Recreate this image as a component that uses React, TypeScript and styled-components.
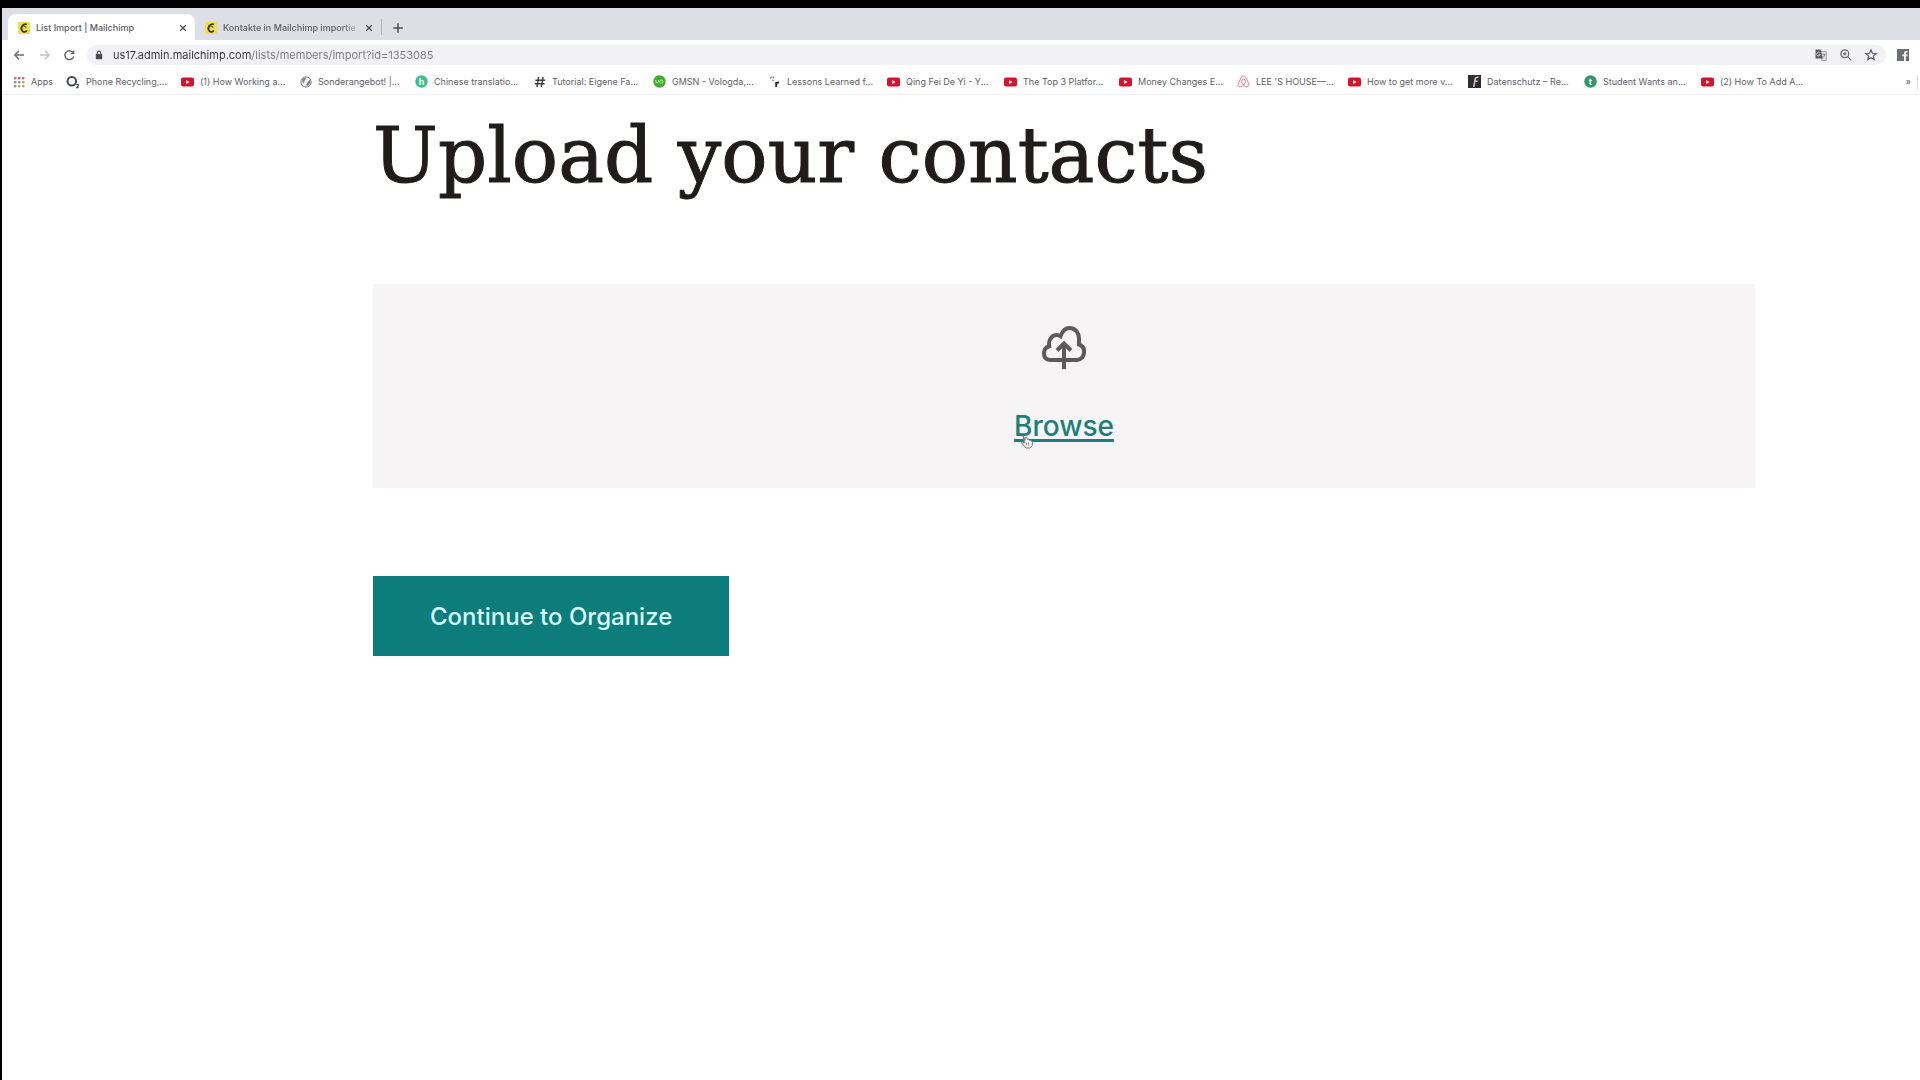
import React from "react";
import styled, { createGlobalStyle, css } from "styled-components";

const GlobalStyle = createGlobalStyle`
  *, *::before, *::after { box-sizing: border-box; }
  html { background: #000; }
  body { margin: 0; background: #000; font-family: Inter, "Liberation Sans", sans-serif; }
  button, input { font: inherit; }
`;

const Screen = styled.div`
  display: flex;
  flex-direction: column;
  min-height: 100vh;
  padding: 8px 0 0 2px;
  background: #000;
`;

const TabStrip = styled.div`
  display: flex;
  align-items: stretch;
  height: 32px;
  padding: 6px 6px 0;
  background: #dedee6;
`;

const Tab = styled.div<{ $active?: boolean }>`
  display: flex;
  align-items: center;
  width: ${(p) => (p.$active ? 187 : 186)}px;
  padding: 2px 8px 0 10px;
  border-radius: 8px 8px 0 0;
  ${(p) => p.$active && css`background: #fff;`}
`;

const PlainButton = styled.button`
  display: flex;
  align-items: center;
  justify-content: center;
  flex: none;
  padding: 0;
  border: 0;
  background: none;
  color: #5c5d62;
`;

const TabTitle = styled(PlainButton)<{ $faded?: boolean }>`
  flex: 1;
  justify-content: flex-start;
  gap: 6px;
  min-width: 0;
  overflow: hidden;
  font-size: 9px;
  font-weight: 500;
  line-height: 14px;
  white-space: nowrap;
  ${(p) =>
    p.$faded &&
    css`
      mask-image: linear-gradient(to right, #000 85%, transparent);
    `}
`;

const NewTabButton = styled(PlainButton)`
  padding-top: 2px;
`;

const StripDivider = styled.span`
  align-self: center;
  width: 1px;
  height: 16px;
  margin-right: 10px;
  background: #b4b5bc;
`;

const Toolbar = styled.div`
  display: flex;
  align-items: center;
  gap: 10px;
  height: 29px;
  padding: 0 10px;
  background: #fff;
`;

const NavButtons = styled.div`
  display: flex;
  gap: 10px;
`;

const AddressBar = styled.div`
  display: flex;
  flex: 1;
  align-items: center;
  gap: 10px;
  height: 20px;
  padding: 0 8px;
  border-radius: 10px;
  background: #f1f1f6;
`;

const AddressInput = styled.input`
  flex: 1;
  min-width: 0;
  height: 16px;
  padding: 0;
  border: 0;
  outline: 0;
  color: #4a4b50;
  font-size: 11px;
  background: linear-gradient(to right, #35363a 139px, #77787e 139px);
  background-clip: text;
  -webkit-text-fill-color: transparent;
`;

const AddressActions = styled.div`
  display: flex;
  gap: 11px;
`;

const Bookmarks = styled.nav`
  display: flex;
  align-items: center;
  gap: 12px;
  height: 26px;
  padding: 0 2px 0 11px;
  border-bottom: 1px solid #f0f0f3;
  background: #fff;
`;

const Bookmark = styled.a<{ $width: number }>`
  display: flex;
  flex: none;
  align-items: center;
  gap: 6px;
  width: ${(p) => p.$width}px;
  color: #5f6065;
  font-size: 9px;
  line-height: 14px;
  text-decoration: none;
  white-space: nowrap;
`;

const MoreBookmarks = styled(PlainButton)`
  margin-left: auto;
  padding-right: 6px;
  border-right: 1px solid #dcdce2;
  font-size: 9px;
  line-height: 14px;
`;

const Page = styled.main`
  display: flex;
  flex: 1;
  flex-direction: column;
  align-items: flex-start;
  padding: 5px 165px 64px 371px;
  background: #fff;
`;

const Title = styled.h1`
  margin: 0 0 72px;
  color: #1f1c1b;
  font-family: "DejaVu Serif", "Liberation Serif", serif;
  font-size: 77px;
  font-weight: 400;
  line-height: 112px;
  -webkit-text-stroke: 1px #1f1c1b;
`;

const DropZone = styled.section`
  display: flex;
  flex-direction: column;
  align-items: center;
  gap: 37px;
  width: 100%;
  padding: 41px 0 44px;
  background: #f6f4f5;
`;

const BrowseLink = styled.a`
  position: relative;
  color: #1d7e7b;
  font-size: 28px;
  font-weight: 500;
  line-height: 36px;
  text-decoration: underline;
  text-decoration-thickness: 3px;
  text-underline-offset: 3px;
  text-decoration-skip-ink: none;
`;

const Pointer = styled.svg`
  position: absolute;
  left: 6px;
  top: 26px;
`;

const ContinueButton = styled.button`
  margin-top: 88px;
  padding: 21px 57px 19px;
  border: 0;
  background: #0c7d7a;
  color: #d8fbff;
  font-size: 24px;
  font-weight: 500;
  line-height: 40px;
`;

const ChimpIcon = () => (
  <svg width="12" height="12" viewBox="0 0 12 12" aria-hidden="true">
    <rect width="12" height="12" rx="1" fill="#f0df4e" />
    <path d="M8.800 2.600C6.800 1.400 3.800 3 3.600 6.100c-.2 2.600 1.500 4 3.200 3.700 1-.2 1.700-.8 2-1.500" fill="none" stroke="#3b3414" strokeWidth="1.700" />
    <path d="M4.600 2.800L3 5.500l.2 2.500M5.600 4.500c1.400-.6 2.600.2 2.400 1.500" fill="none" stroke="#3b3414" strokeWidth="1" />
  </svg>
);

const CloseIcon = () => (
  <svg width="8" height="8" viewBox="0 0 8 8" aria-hidden="true">
    <path d="M1.200 1.200l5.600 5.600M6.800 1.200L1.200 6.800" stroke="#4c4d52" strokeWidth="1.300" />
  </svg>
);

const YoutubeIcon = () => (
  <svg width="13" height="12" viewBox="0 0 13 12" aria-hidden="true">
    <rect y="1.500" width="13" height="9" rx="2" fill="#d5132f" />
    <path d="M5.200 4v4l3.400-2z" fill="#fff" />
  </svg>
);

const AppsIcon = () => (
  <svg width="12" height="12" viewBox="0 0 12 12" aria-hidden="true">
    {["#c4717c", "#b7686c", "#c4717c", "#87918c", "#7d9cc2", "#d0a35a", "#8aa37c", "#d0a35a", "#d0a35a"].map((fill, i) => (
      <rect key={i} x={1 + (i % 3) * 4} y={1 + Math.floor(i / 3) * 4} width="2.400" height="2.400" fill={fill} />
    ))}
  </svg>
);

const OxygenIcon = () => (
  <svg width="14" height="14" viewBox="0 0 14 14" aria-hidden="true">
    <circle cx="5.800" cy="6.300" r="4.300" fill="none" stroke="#44474f" strokeWidth="2" />
    <path d="M10.300 9.600h2v1.300l-1.600 1.900h2" fill="none" stroke="#44474f" strokeWidth="1.100" />
  </svg>
);

const GlobeIcon = () => (
  <svg width="12" height="12" viewBox="0 0 12 12" aria-hidden="true">
    <circle cx="6" cy="6" r="5.100" fill="#f4f4f6" stroke="#797a7f" strokeWidth="1" />
    <path d="M2 3l3-1.500L6 3 4.500 5 4 7.500 2.500 6.500zM10 3.500L7.500 6 6 9.500 8 10l2.500-3z" fill="#85868b" />
  </svg>
);

const HashIcon = () => (
  <svg width="12" height="12" viewBox="0 0 12 12" aria-hidden="true">
    <path d="M4.600 1L3 11M9 1L7.400 11M1.400 4.200h9.800M.8 7.800h9.800" stroke="#3d3e42" strokeWidth="1.500" />
  </svg>
);

const UpworkIcon = () => (
  <svg width="13" height="13" viewBox="0 0 13 13" aria-hidden="true">
    <circle cx="6.500" cy="6.500" r="6.200" fill="#3fae2c" />
    <path d="M2.800 5v1.500a1.300 1.300 0 0 0 2.600 0V5c.8 2 1.500 3 3 3a1.500 1.500 0 1 0-1.500-1.500" fill="none" stroke="#c9f0bd" strokeWidth=".9" />
  </svg>
);

const DottedIcon = () => (
  <svg width="12" height="12" viewBox="0 0 12 12" aria-hidden="true">
    <path d="M1 2.500l1.500-1.500h2l.5 1M3 4l2 1" fill="none" stroke="#8b8c91" strokeWidth="1.200" />
    <path d="M7.200 11V6M7.200 8c.3-1.200 1.300-1.700 2.800-1.500" fill="none" stroke="#2e2f33" strokeWidth="1.900" />
  </svg>
);

const AirbnbIcon = () => (
  <svg width="13" height="13" viewBox="0 0 13 13" aria-hidden="true">
    <path d="M6.500 10C4.800 8 4.500 7.200 4.600 6.300a1.900 1.900 0 0 1 3.800 0C8.500 7.200 8.200 8 6.500 10zm0 0c-1.500 2-3.300 2.400-4.600 1.500-1.200-.9-1-2-.4-3.400.9-2.200 2-4.300 3.100-6.300C5.300.6 7.700.6 8.400 1.800c1.100 2 2.200 4.100 3.100 6.300.6 1.400.8 2.500-.4 3.400-1.300.9-3.100.5-4.600-1.500z" fill="none" stroke="#e77a87" strokeWidth="1" />
  </svg>
);

const DarkIcon = () => (
  <svg width="13" height="13" viewBox="0 0 13 13" aria-hidden="true">
    <rect width="13" height="13" fill="#332b30" />
    <path d="M10.500 1.500C7 1.500 6.500 3 6.200 5L5 12h1.500l1-5h2l.3-1.500H7.800C8 3.600 8.500 3 10.500 3z" fill="#c9c1c5" />
  </svg>
);

const LetterIcon = ({ letter, fill }: { letter: string; fill: string }) => (
  <svg width="13" height="13" viewBox="0 0 13 13" aria-hidden="true">
    <circle cx="6.500" cy="6.500" r="6.200" fill={fill} />
    <text x="6.500" y="9.500" textAnchor="middle" fontSize="9" fontWeight="700" fill="#fff">{letter}</text>
  </svg>
);

const bookmarks: { label: string; width: number; icon: React.ReactNode }[] = [
  { label: "Apps", width: 41, icon: <AppsIcon /> },
  { label: "Phone Recycling,...", width: 103, icon: <OxygenIcon /> },
  { label: "(1) How Working a...", width: 107, icon: <YoutubeIcon /> },
  { label: "Sonderangebot! |...", width: 103, icon: <GlobeIcon /> },
  { label: "Chinese translatio...", width: 107, icon: <LetterIcon letter="h" fill="#3cc08b" /> },
  { label: "Tutorial: Eigene Fa...", width: 107, icon: <HashIcon /> },
  { label: "GMSN - Vologda,...", width: 104, icon: <UpworkIcon /> },
  { label: "Lessons Learned f...", width: 106, icon: <DottedIcon /> },
  { label: "Qing Fei De Yi - Y...", width: 105, icon: <YoutubeIcon /> },
  { label: "The Top 3 Platfor...", width: 103, icon: <YoutubeIcon /> },
  { label: "Money Changes E...", width: 106, icon: <YoutubeIcon /> },
  { label: "LEE 'S HOUSE—...", width: 99, icon: <AirbnbIcon /> },
  { label: "How to get more v...", width: 108, icon: <YoutubeIcon /> },
  { label: "Datenschutz – Re...", width: 104, icon: <DarkIcon /> },
  { label: "Student Wants an...", width: 105, icon: <LetterIcon letter="t" fill="#35946f" /> },
  { label: "(2) How To Add A...", width: 104, icon: <YoutubeIcon /> },
];

export default function App() {
  return (
    <Screen>
      <GlobalStyle />
      <TabStrip>
        <Tab $active>
          <TabTitle><ChimpIcon />List Import | Mailchimp</TabTitle>
          <PlainButton aria-label="Close tab"><CloseIcon /></PlainButton>
        </Tab>
        <Tab>
          <TabTitle $faded><ChimpIcon />Kontakte in Mailchimp importie</TabTitle>
          <PlainButton aria-label="Close tab"><CloseIcon /></PlainButton>
        </Tab>
        <StripDivider />
        <NewTabButton aria-label="New tab">
          <svg width="12" height="12" viewBox="0 0 12 12" aria-hidden="true">
            <path d="M6 1.200v9.600M1.200 6h9.600" stroke="#4c4d52" strokeWidth="1.500" />
          </svg>
        </NewTabButton>
      </TabStrip>
      <Toolbar>
        <NavButtons>
          <PlainButton aria-label="Back">
            <svg width="15" height="14" viewBox="0 0 15 14" aria-hidden="true">
              <path d="M12 7H3M7 2.800L2.800 7 7 11.200" fill="none" stroke="#6a6b70" strokeWidth="1.400" />
            </svg>
          </PlainButton>
          <PlainButton aria-label="Forward">
            <svg width="15" height="14" viewBox="0 0 15 14" aria-hidden="true">
              <path d="M3 7h9M8 2.800L12.200 7 8 11.200" fill="none" stroke="#c2c3c9" strokeWidth="1.400" />
            </svg>
          </PlainButton>
          <PlainButton aria-label="Reload">
            <svg width="15" height="14" viewBox="0 0 15 14" aria-hidden="true">
              <path d="M11.200 4.600A4.500 4.500 0 1 0 11.800 8.400" fill="none" stroke="#6a6b70" strokeWidth="1.500" />
              <path d="M12.400 1.800v4.400H8z" fill="#6a6b70" />
            </svg>
          </PlainButton>
        </NavButtons>
        <AddressBar>
          <svg width="8" height="10" viewBox="0 0 8 10" aria-hidden="true">
            <rect x=".8" y="4" width="6.400" height="5.200" rx=".6" fill="#4c4d52" />
            <path d="M2.300 4V2.800a1.700 1.700 0 0 1 3.400 0V4" fill="none" stroke="#4c4d52" strokeWidth="1.100" />
          </svg>
          <AddressInput aria-label="Address" defaultValue="us17.admin.mailchimp.com/lists/members/import?id=1353085" />
          <AddressActions>
            <PlainButton aria-label="Translate">
              <svg width="14" height="14" viewBox="0 0 14 14" aria-hidden="true">
                <path d="M5.500 3.500h6.800v9H7.600z" fill="#dcdce1" stroke="#97989e" strokeWidth=".8" />
                <path d="M1.500 1.500h5l2.500 9h-7.500z" fill="#5a5b60" />
                <path d="M6 5.200a1.800 1.800 0 1 0 .2 1.500H4.600" fill="none" stroke="#e4e4ea" strokeWidth=".8" />
                <path d="M8.500 6.500h3M10 5.500v1M9 9.500l2-2.500" fill="none" stroke="#77787e" strokeWidth=".8" />
              </svg>
            </PlainButton>
            <PlainButton aria-label="Zoom">
              <svg width="14" height="14" viewBox="0 0 14 14" aria-hidden="true">
                <circle cx="5.800" cy="5.800" r="3.900" fill="none" stroke="#67686d" strokeWidth="1.300" />
                <path d="M8.700 8.700l3.600 3.600M4 5.800h3.600M5.800 4v3.600" stroke="#67686d" strokeWidth="1.200" />
              </svg>
            </PlainButton>
            <PlainButton aria-label="Bookmark this page">
              <svg width="14" height="14" viewBox="0 0 14 14" aria-hidden="true">
                <path d="M7 2l1.500 3.300 3.600.4-2.700 2.400.8 3.500L7 9.800l-3.200 1.800.8-3.500L1.900 5.700l3.600-.4z" fill="none" stroke="#5a5b60" strokeWidth="1.200" />
              </svg>
            </PlainButton>
          </AddressActions>
        </AddressBar>
        <PlainButton aria-label="Facebook extension">
          <svg width="14" height="14" viewBox="0 0 14 14" aria-hidden="true">
            <rect x="1" y="1" width="12" height="12" fill="#6d6e73" />
            <path d="M8 13V8.300H6.300V6.500H8V5.200C8 3.700 8.900 2.900 10.400 2.900h1.200v1.700h-.8c-.7 0-.9.3-.9.900v1h1.700l-.2 1.800H9.900V13z" fill="#f4f4f6" />
          </svg>
        </PlainButton>
      </Toolbar>
      <Bookmarks aria-label="Bookmarks">
        {bookmarks.map((b) => (
          <Bookmark key={b.label} href="#" $width={b.width}>
            {b.icon}
            {b.label}
          </Bookmark>
        ))}
        <MoreBookmarks aria-label="More bookmarks">»</MoreBookmarks>
      </Bookmarks>
      <Page>
        <Title>Upload your contacts</Title>
        <DropZone aria-label="File upload">
          <svg width="44" height="46" viewBox="0 0 44 46" fill="none" stroke="#5d5a5b" strokeWidth="4" aria-hidden="true">
            <path d="M7.500 35C3.500 34.500 2 31.500 2 28.500c0-4 2.200-6.500 5.200-7.300C6 15 10 10.500 14 10c2-.2 3 .2 4.500 1.200C20.500 6 23.500 3 27.500 3c6 0 9.700 5 9.500 11v5.500c3.600 1.300 5.500 4.500 5 8.500-.5 4-3 6.500-7 7z" />
            <path d="M22 44V19M15 25.500l7-7 7 7" />
          </svg>
          <BrowseLink href="#">
            Browse
            <Pointer width="14" height="15" viewBox="0 0 14 15" aria-hidden="true">
              <path d="M3 1.500l2 5V3.500l1.500-.5 1 2.500 1.500-.5.7 1.500L11 6.300l1.500 2-.3 3.500L10 14H6L1.500 9l1-1.300L4.500 9z" fill="#f6f4f5" stroke="#77787b" strokeWidth="1" />
              <path d="M6.500 8.500v3M8.500 8.500v3" stroke="#77787b" strokeWidth=".8" />
            </Pointer>
          </BrowseLink>
        </DropZone>
        <ContinueButton type="button">Continue to Organize</ContinueButton>
      </Page>
    </Screen>
  );
}
